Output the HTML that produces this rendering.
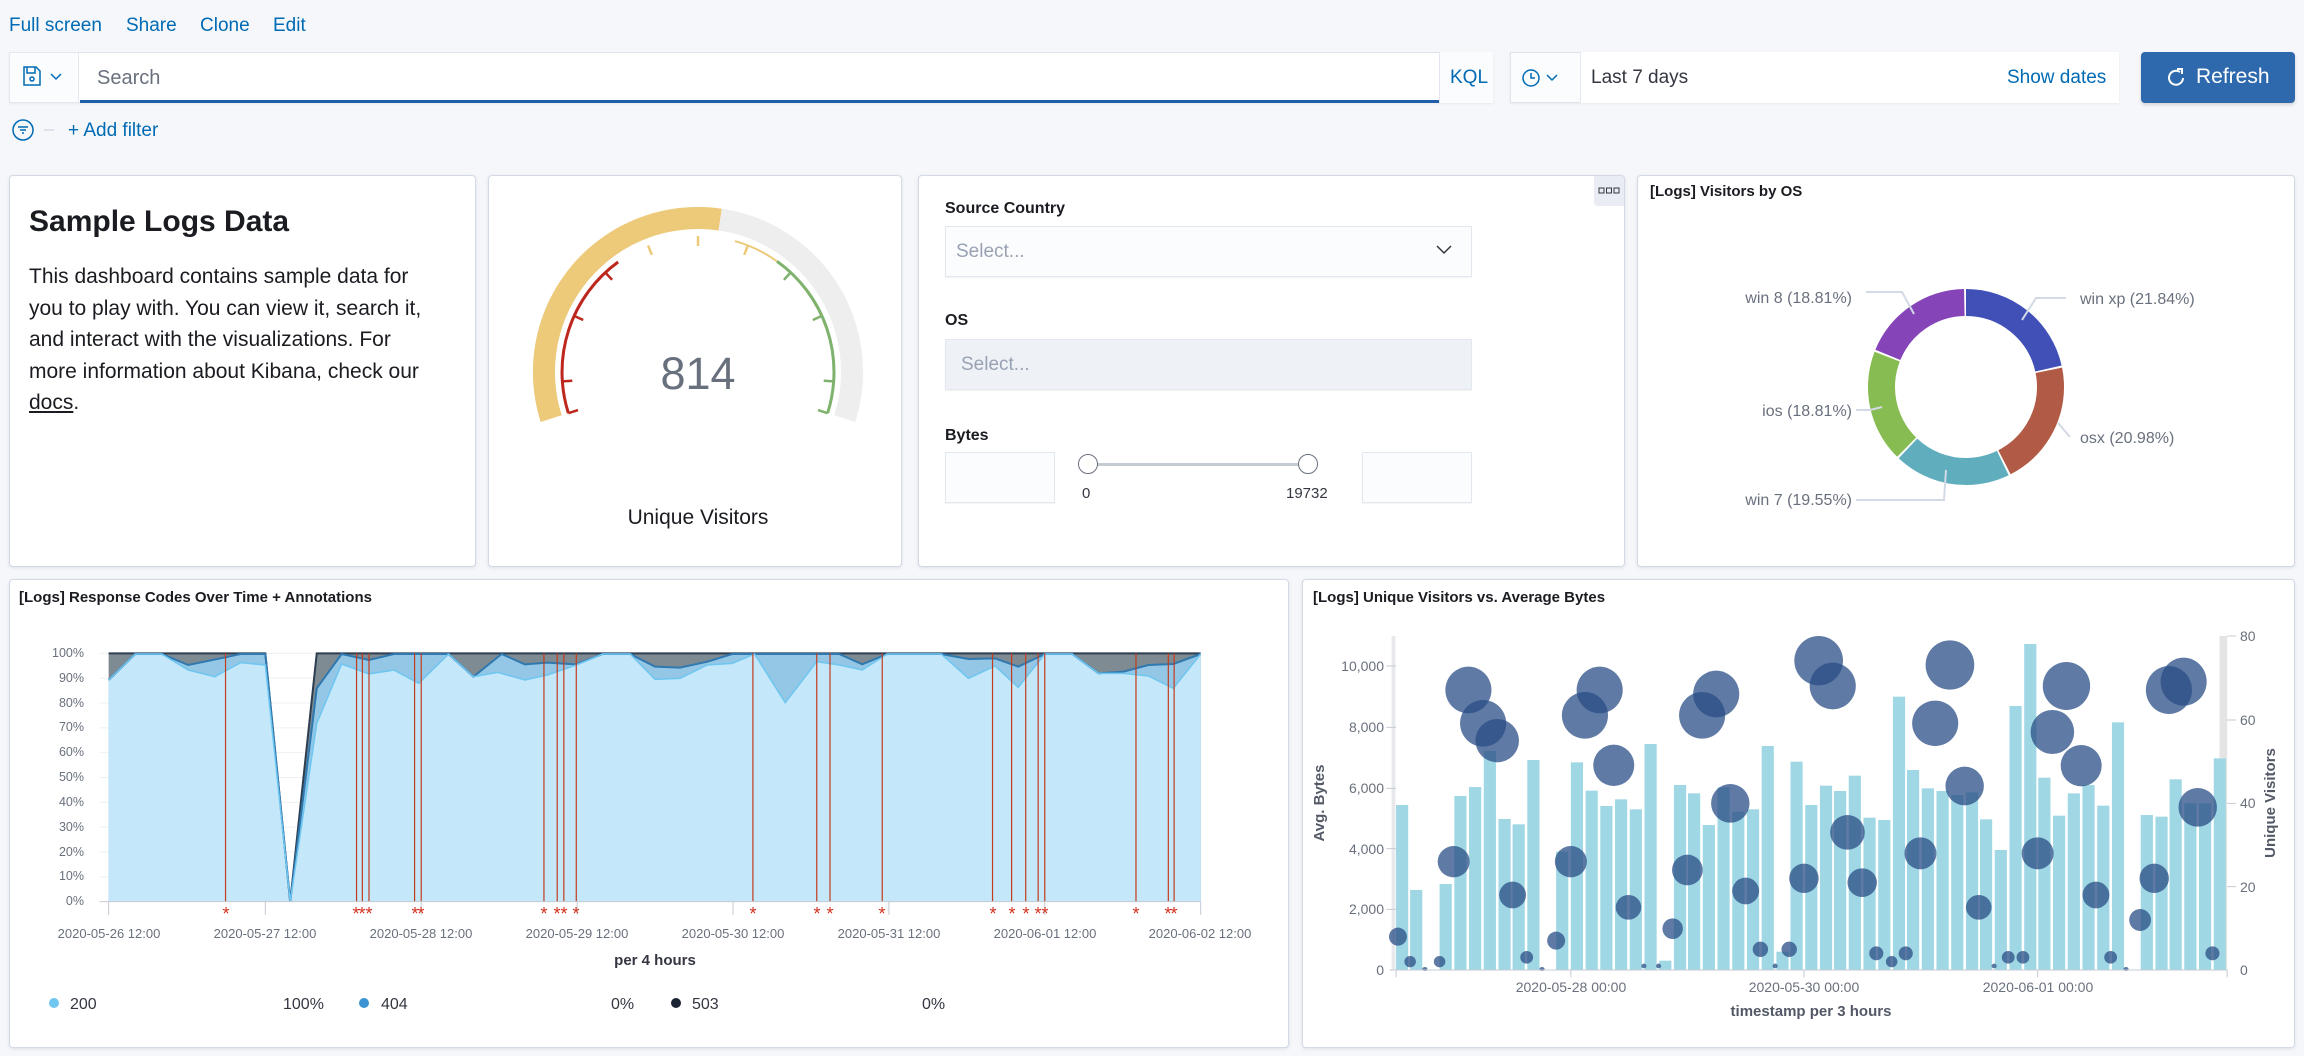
<!DOCTYPE html>
<html><head><meta charset="utf-8"><style>
*{box-sizing:border-box;margin:0;padding:0}
body{width:2304px;height:1056px;background:#f5f7fa;font-family:"Liberation Sans",sans-serif;position:relative;overflow:hidden;color:#343741}
.a{position:absolute}
.lnk{color:#006bb4;font-size:19px;top:15px}
.box{background:#fbfcfd;border:1px solid #dfe4ec;box-shadow:0 1px 2px rgba(0,0,0,.06)}
.panel{position:absolute;background:#fff;border:1px solid #d3dae6;border-radius:4px;box-shadow:0 1px 3px rgba(152,162,179,.25)}
.ttl{font-weight:bold;font-size:15px;color:#1a1c21}
.lbl{font-weight:bold;font-size:16px;color:#1a1c21}
.inp{position:absolute;background:#fbfcfd;border:1px solid #e3e8f0;box-shadow:0 1px 1px rgba(0,0,0,.05)}
.ph{color:#98a2b3;font-size:19px}
</style></head><body>
<div class="a lnk" style="left:9px">Full screen</div>
<div class="a lnk" style="left:126px">Share</div>
<div class="a lnk" style="left:200px">Clone</div>
<div class="a lnk" style="left:273px">Edit</div>

<div class="a box" style="left:9px;top:52px;width:1484px;height:51px;background:#fff"></div>
<div class="a" style="left:9px;top:52px;width:70px;height:51px;background:#fbfcfd;border:1px solid #e3e8f0"></div>
<svg class="a" style="left:22px;top:65px" width="48" height="26" viewBox="0 0 48 26"><path d="M2 2h12l4 4v14H2z M5 2v6h8V2" fill="none" stroke="#006bb4" stroke-width="1.5"/><circle cx="10" cy="14" r="2" fill="none" stroke="#006bb4" stroke-width="1.5"/><path d="M29 9l5 5 5-5" fill="none" stroke="#006bb4" stroke-width="1.5"/></svg>
<div class="a" style="left:97px;top:67px;font-size:20px;color:#69707d">Search</div>
<div class="a" style="left:80px;top:100px;width:1359px;height:3px;background:#1f5fa9"></div>
<div class="a" style="left:1439px;top:52px;width:54px;height:51px;border-left:1px solid #e3e8f0;background:#fbfcfd"></div>
<div class="a" style="left:1450px;top:67px;font-size:19px;color:#006bb4">KQL</div>

<div class="a box" style="left:1510px;top:52px;width:609px;height:51px;background:#fbfcfd"></div>
<div class="a" style="left:1580px;top:52px;width:539px;height:51px;border-left:1px solid #e3e8f0;background:#fff"></div>
<svg class="a" style="left:1520px;top:66px" width="50" height="24"><circle cx="11" cy="12" r="8" fill="none" stroke="#006bb4" stroke-width="1.5"/><path d="M11 7v5h4" fill="none" stroke="#006bb4" stroke-width="1.5"/><path d="M27 9l5 5 5-5" fill="none" stroke="#006bb4" stroke-width="1.5"/></svg>
<div class="a" style="left:1591px;top:67px;font-size:19px;color:#343741">Last 7 days</div>
<div class="a" style="left:2007px;top:67px;font-size:19px;color:#006bb4">Show dates</div>

<div class="a" style="left:2141px;top:52px;width:154px;height:51px;background:#2e69ad;border-radius:4px;box-shadow:0 2px 3px rgba(0,0,0,.15)"></div>
<svg class="a" style="left:2165px;top:66px" width="22" height="24"><path d="M15 6 A7 7 0 1 0 18 12" fill="none" stroke="#fff" stroke-width="2"/><path d="M12 3h5v5" fill="none" stroke="#fff" stroke-width="2"/></svg>
<div class="a" style="left:2196px;top:65px;font-size:21px;color:#fff">Refresh</div>

<svg class="a" style="left:12px;top:118px" width="60" height="24"><circle cx="11" cy="12" r="10" fill="none" stroke="#006bb4" stroke-width="1.5"/><path d="M6 9h10M8 12h6M10 15h2" stroke="#006bb4" stroke-width="1.5"/><path d="M32 12h10" stroke="#d3dae6" stroke-width="1.5"/></svg>
<div class="a" style="left:68px;top:120px;font-size:19px;color:#006bb4">+ Add filter</div>

<!-- panels -->
<div class="panel" style="left:9px;top:175px;width:467px;height:392px"></div>
<div class="panel" style="left:488px;top:175px;width:414px;height:392px"></div>
<div class="panel" style="left:918px;top:175px;width:707px;height:392px"></div>
<div class="panel" style="left:1637px;top:175px;width:658px;height:392px"></div>
<div class="panel" style="left:9px;top:579px;width:1280px;height:469px"></div>
<div class="panel" style="left:1302px;top:579px;width:993px;height:469px"></div>

<div class="a" style="left:29px;top:205px;font-size:30px;font-weight:bold;color:#1a1c21">Sample Logs Data</div>
<div class="a" style="left:29px;top:261px;width:398px;font-size:21px;line-height:31.6px;color:#1a1c21">This dashboard contains sample data for you to play with. You can view it, search it, and interact with the visualizations. For more information about Kibana, check our <u>docs</u>.</div>

<svg class="a" style="left:0;top:0" width="2304" height="1056">
<!-- gauge -->
<g transform="translate(698,372)">
<path d="M-157.3 50 A165 165 0 0 1 23.8 -163.3 L20.6 -141.5 A143 143 0 0 0 -136.3 43.3Z" fill="#ecca7a"/>
<path d="M23.8 -163.3 A165 165 0 0 1 157.3 50 L136.3 43.3 A143 143 0 0 0 20.6 -141.5Z" fill="#eeeeee"/>
<path d="M-129.6 41.2 A136 136 0 0 1 -79.9 -110" fill="none" stroke="#bd271e" stroke-width="3"/>
<path d="M37 -130.9 A136 136 0 0 1 79 -110.7" fill="none" stroke="#ecca7a" stroke-width="2"/>
<path d="M79 -110.7 A136 136 0 0 1 129.6 41.2" fill="none" stroke="#7eb26d" stroke-width="3"/>
<g stroke-width="2.5">
<path d="M-129.6 41.2L-120 38.1M-135.7 9.4L-125.7 8.7M-123.9 -56.1L-114.8 -52M-92.7 -99.5L-85.9 -92.2" stroke="#bd271e"/>
<path d="M-49.9 -126.5L-46.2 -117.2M0 -136L0 -126M49.9 -126.5L46.2 -117.2" stroke="#ecca7a"/>
<path d="M92.7 -99.5L85.9 -92.2M123.9 -56.1L114.8 -52M135.7 9.4L125.7 8.7M129.6 41.2L120 38.1" stroke="#7eb26d"/>
</g>
<text x="0" y="17" text-anchor="middle" font-family="Liberation Sans" font-size="45" fill="#69707d">814</text>
<text x="0" y="152" text-anchor="middle" font-family="Liberation Sans" font-size="21" fill="#1a1c21">Unique Visitors</text>
</g>

<!-- donut -->
<g transform="translate(1966,387) rotate(-90)" fill="none" stroke-width="27">
<circle r="84.5" stroke="#4150b7" stroke-dasharray="114 500"/>
<circle r="84.5" stroke="#b15a46" stroke-dasharray="109.5 500" stroke-dashoffset="-115.9"/>
<circle r="84.5" stroke="#60aebd" stroke-dasharray="102 500" stroke-dashoffset="-227.3"/>
<circle r="84.5" stroke="#86bc51" stroke-dasharray="98 500" stroke-dashoffset="-331.1"/>
<circle r="84.5" stroke="#8545b8" stroke-dasharray="98 500" stroke-dashoffset="-431"/>
</g>
<g stroke="#d3dae6" stroke-width="2" fill="none">
<path d="M1866 292h36l12 22"/><path d="M2066 298h-30l-14 22"/><path d="M1856 410h14l12-3"/><path d="M2070 437l-12-14"/><path d="M1856 500h88l2-30"/>
</g>
<g font-family="Liberation Sans" font-size="16" fill="#69707d">
<text x="1852" y="303" text-anchor="end">win 8 (18.81%)</text>
<text x="2080" y="304">win xp (21.84%)</text>
<text x="1852" y="416" text-anchor="end">ios (18.81%)</text>
<text x="2080" y="443">osx (20.98%)</text>
<text x="1852" y="505" text-anchor="end">win 7 (19.55%)</text>
</g>

<!-- left chart -->
<g transform="translate(0,560) scale(0.82918,0.33333)">
<path stroke="#eef0f3" vector-effect="non-scaling-stroke" d="M120 280H1448M120 354.5H1448M120 429H1448M120 503.5H1448M120 578H1448M120 652.5H1448M120 727H1448M120 801.5H1448M120 876H1448M120 950.5H1448"/>
<polygon fill="#7e8b92" points="131,280 320,280 350,1025 382,280 1448,280 1448,1025 131,1025"/>
<polygon fill="#93c7e5" points="131,360 163,282 195,282 227,315 272,292 290,282 320,282 350,1025 382,385 412,282 445,300 475,282 541,282 571,350 605,282 633,313 660,308 695,313 727,282 760,282 790,320 820,323 853,305 883,282 1012,282 1040,313 1070,282 1135,282 1168,297 1200,295 1228,320 1260,282 1293,282 1325,340 1355,335 1385,315 1415,312 1448,282 1448,1025 131,1025"/>
<polygon fill="#c4e7f9" points="131,360 163,282 195,282 227,330 259,350 290,308 320,315 350,1025 382,490 412,312 445,342 475,330 505,370 541,282 571,350 600,337 633,360 660,345 695,315 727,282 760,282 790,358 820,355 853,315 883,310 910,282 947,428 985,305 1012,315 1040,330 1070,282 1135,282 1168,355 1200,318 1228,382 1260,282 1293,282 1325,340 1355,340 1385,348 1415,385 1448,282 1448,1025 131,1025"/>
<polyline fill="none" stroke="#2c3e50" stroke-width="2" vector-effect="non-scaling-stroke" points="131,280 320,280 350,1025 382,280 1448,280"/>
<polyline fill="none" stroke="#2f78b0" stroke-width="2" vector-effect="non-scaling-stroke" points="131,360 163,282 195,282 227,315 272,292 290,282 320,282 350,1025 382,385 412,282 445,300 475,282 541,282 571,350 605,282 633,313 660,308 695,313 727,282 760,282 790,320 820,323 853,305 883,282 1012,282 1040,313 1070,282 1135,282 1168,297 1200,295 1228,320 1260,282 1293,282 1325,340 1355,335 1385,315 1415,312 1448,282"/>
<polyline fill="none" stroke="#6ec6f1" stroke-width="1.5" vector-effect="non-scaling-stroke" points="131,360 163,282 195,282 227,330 259,350 290,308 320,315 350,1025 382,490 412,312 445,342 475,330 505,370 541,282 571,350 600,337 633,360 660,345 695,315 727,282 760,282 790,358 820,355 853,315 883,310 910,282 947,428 985,305 1012,315 1040,330 1070,282 1135,282 1168,355 1200,318 1228,382 1260,282 1293,282 1325,340 1355,340 1385,348 1415,385 1448,282"/>
<path vector-effect="non-scaling-stroke" stroke="#c23c1e" stroke-width="1.2" d="M272 280V1025M430 280V1025M437 280V1025M445 280V1025M500 280V1025M508 280V1025M656 280V1025M672 280V1025M680 280V1025M695 280V1025M908 280V1025M985 280V1025M1001 280V1025M1064 280V1025M1197 280V1025M1220 280V1025M1237 280V1025M1252 280V1025M1260 280V1025M1370 280V1025M1409 280V1025M1416 280V1025"/>
<path vector-effect="non-scaling-stroke" stroke="#c5cbd3" stroke-width="1" d="M120 1025H1448M131 1025V1065M320 1025V1065M508 1025V1065M696 1025V1065M884 1025V1065M1072 1025V1065M1260 1025V1065M1448 1025V1065"/>
</g>
<g font-family="Liberation Sans" font-size="18" fill="#d4301e" text-anchor="middle">
<text x="226" y="920">*</text><text x="356" y="920">*</text><text x="362" y="920">*</text><text x="369" y="920">*</text><text x="415" y="920">*</text><text x="421" y="920">*</text><text x="544" y="920">*</text><text x="557" y="920">*</text><text x="564" y="920">*</text><text x="576" y="920">*</text><text x="753" y="920">*</text><text x="817" y="920">*</text><text x="830" y="920">*</text><text x="882" y="920">*</text><text x="993" y="920">*</text><text x="1012" y="920">*</text><text x="1026" y="920">*</text><text x="1038" y="920">*</text><text x="1045" y="920">*</text><text x="1136" y="920">*</text><text x="1168" y="920">*</text><text x="1174" y="920">*</text>
</g>
<g font-family="Liberation Sans" font-size="12.5" fill="#69707d" text-anchor="end">
<text x="84" y="657">100%</text><text x="84" y="682">90%</text><text x="84" y="707">80%</text><text x="84" y="731">70%</text><text x="84" y="756">60%</text><text x="84" y="781">50%</text><text x="84" y="806">40%</text><text x="84" y="831">30%</text><text x="84" y="856">20%</text><text x="84" y="880">10%</text><text x="84" y="905">0%</text>
</g>
<g font-family="Liberation Sans" font-size="13" fill="#69707d" text-anchor="middle">
<text x="109" y="938">2020-05-26 12:00</text><text x="265" y="938">2020-05-27 12:00</text><text x="421" y="938">2020-05-28 12:00</text><text x="577" y="938">2020-05-29 12:00</text><text x="733" y="938">2020-05-30 12:00</text><text x="889" y="938">2020-05-31 12:00</text><text x="1045" y="938">2020-06-01 12:00</text><text x="1200" y="938">2020-06-02 12:00</text>
</g>
<text x="655" y="965" text-anchor="middle" font-family="Liberation Sans" font-size="15" font-weight="bold" fill="#343741">per 4 hours</text>
<g font-family="Liberation Sans" font-size="16" fill="#343741">
<circle cx="54" cy="1003" r="5" fill="#6ec6f1"/><text x="70" y="1009">200</text><text x="283" y="1009">100%</text>
<circle cx="364" cy="1003" r="5" fill="#3a93d2"/><text x="381" y="1009">404</text><text x="611" y="1009">0%</text>
<circle cx="676" cy="1003" r="5" fill="#1a2333"/><text x="692" y="1009">503</text><text x="922" y="1009">0%</text>
</g>

<!-- right chart -->
<g transform="translate(1300,570) scale(0.64032,0.33333)">
<rect x="143" y="198" width="6" height="1002" fill="#e7e9ec"/>
<rect x="1436" y="198" width="12" height="1002" fill="#e4e4e4"/>
<g fill="#9fd7e4">
<rect x="150" y="705" width="19" height="495"/><rect x="172" y="960" width="19" height="240"/><rect x="218" y="942" width="19" height="258"/><rect x="241" y="678" width="19" height="522"/><rect x="264" y="651" width="19" height="549"/><rect x="287" y="543" width="19" height="657"/><rect x="310" y="747" width="19" height="453"/><rect x="332" y="763" width="19" height="437"/><rect x="355" y="570" width="19" height="630"/><rect x="400" y="845" width="19" height="355"/><rect x="423" y="577" width="19" height="623"/><rect x="446" y="662" width="19" height="538"/><rect x="469" y="708" width="19" height="492"/><rect x="492" y="688" width="19" height="512"/><rect x="515" y="718" width="19" height="482"/><rect x="538" y="522" width="19" height="678"/><rect x="561" y="1172" width="19" height="28"/><rect x="584" y="645" width="19" height="555"/><rect x="606" y="670" width="19" height="530"/><rect x="629" y="765" width="19" height="435"/><rect x="652" y="652" width="19" height="548"/><rect x="675" y="725" width="19" height="475"/><rect x="698" y="718" width="19" height="482"/><rect x="721" y="528" width="19" height="672"/><rect x="744" y="1145" width="19" height="55"/><rect x="766" y="575" width="19" height="625"/><rect x="789" y="705" width="19" height="495"/><rect x="812" y="647" width="19" height="553"/><rect x="834" y="663" width="19" height="537"/><rect x="857" y="617" width="19" height="583"/><rect x="880" y="743" width="19" height="457"/><rect x="903" y="750" width="19" height="450"/><rect x="926" y="380" width="19" height="820"/><rect x="948" y="600" width="19" height="600"/><rect x="971" y="655" width="19" height="545"/><rect x="994" y="663" width="19" height="537"/><rect x="1017" y="675" width="19" height="525"/><rect x="1040" y="667" width="19" height="533"/><rect x="1062" y="748" width="19" height="452"/><rect x="1085" y="840" width="19" height="360"/><rect x="1108" y="408" width="19" height="792"/><rect x="1131" y="222" width="19" height="978"/><rect x="1153" y="623" width="19" height="577"/><rect x="1176" y="737" width="19" height="463"/><rect x="1199" y="670" width="19" height="530"/><rect x="1222" y="645" width="19" height="555"/><rect x="1245" y="707" width="19" height="493"/><rect x="1268" y="457" width="19" height="743"/><rect x="1313" y="735" width="19" height="465"/><rect x="1336" y="740" width="19" height="460"/><rect x="1358" y="628" width="19" height="572"/><rect x="1381" y="700" width="19" height="500"/><rect x="1404" y="700" width="19" height="500"/><rect x="1427" y="565" width="19" height="635"/>
</g>
<g fill="#2a4d86" fill-opacity="0.75">
<ellipse cx="263" cy="360" rx="36" ry="70"/><ellipse cx="286" cy="460" rx="36" ry="70"/><ellipse cx="308" cy="512" rx="34" ry="65"/><ellipse cx="445" cy="436" rx="36" ry="70"/><ellipse cx="468" cy="360" rx="36" ry="70"/><ellipse cx="628" cy="436" rx="36" ry="70"/><ellipse cx="650" cy="372" rx="36" ry="70"/><ellipse cx="810" cy="272" rx="38" ry="74"/><ellipse cx="832" cy="348" rx="36" ry="70"/><ellipse cx="1015" cy="285" rx="38" ry="74"/><ellipse cx="992" cy="460" rx="36" ry="68"/><ellipse cx="1197" cy="348" rx="37" ry="72"/><ellipse cx="1175" cy="486" rx="34" ry="66"/><ellipse cx="1220" cy="587" rx="32" ry="62"/><ellipse cx="1357" cy="360" rx="36" ry="72"/><ellipse cx="1380" cy="335" rx="36" ry="72"/>
<ellipse cx="490" cy="586" rx="32" ry="62"/><ellipse cx="1038" cy="648" rx="30" ry="58"/><ellipse cx="672" cy="700" rx="30" ry="58"/><ellipse cx="855" cy="787" rx="27" ry="52"/><ellipse cx="1402" cy="712" rx="30" ry="58"/>
<ellipse cx="240" cy="875" rx="25" ry="47"/><ellipse cx="423" cy="875" rx="25" ry="47"/><ellipse cx="605" cy="900" rx="24" ry="46"/><ellipse cx="787" cy="925" rx="23" ry="44"/><ellipse cx="878" cy="938" rx="23" ry="43"/><ellipse cx="969" cy="850" rx="25" ry="48"/><ellipse cx="1152" cy="850" rx="25" ry="48"/><ellipse cx="1334" cy="925" rx="23" ry="44"/><ellipse cx="332" cy="975" rx="21" ry="40"/><ellipse cx="696" cy="963" rx="21" ry="40"/><ellipse cx="513" cy="1012" rx="20" ry="37"/><ellipse cx="1060" cy="1012" rx="20" ry="37"/><ellipse cx="1243" cy="975" rx="21" ry="40"/><ellipse cx="1312" cy="1050" rx="17" ry="33"/><ellipse cx="582" cy="1076" rx="16" ry="31"/><ellipse cx="400" cy="1112" rx="14" ry="27"/><ellipse cx="153" cy="1100" rx="14" ry="27"/>
<ellipse cx="172" cy="1175" rx="9" ry="17"/><ellipse cx="218" cy="1175" rx="9" ry="17"/><ellipse cx="354" cy="1162" rx="10" ry="19"/><ellipse cx="719" cy="1138" rx="12" ry="23"/><ellipse cx="764" cy="1138" rx="12" ry="23"/><ellipse cx="900" cy="1150" rx="11" ry="21"/><ellipse cx="946" cy="1150" rx="11" ry="21"/><ellipse cx="924" cy="1175" rx="9" ry="17"/><ellipse cx="1106" cy="1162" rx="10" ry="19"/><ellipse cx="1129" cy="1162" rx="10" ry="19"/><ellipse cx="1266" cy="1162" rx="10" ry="19"/><ellipse cx="1425" cy="1150" rx="11" ry="21"/>
<ellipse cx="195" cy="1197" rx="4" ry="6"/><ellipse cx="378" cy="1197" rx="4" ry="6"/><ellipse cx="537" cy="1188" rx="4" ry="7"/><ellipse cx="560" cy="1188" rx="4" ry="7"/><ellipse cx="742" cy="1188" rx="4" ry="7"/><ellipse cx="1084" cy="1188" rx="4" ry="7"/><ellipse cx="1290" cy="1197" rx="4" ry="6"/>
</g>
<path vector-effect="non-scaling-stroke" stroke="#c5cbd3" d="M140 1200H1448M150 1200V1222M423 1200V1222M787 1200V1222M1152 1200V1222M1448 1200V1222M135 288H150M135 472H150M135 655H150M135 836H150M135 1018H150M1448 198H1462M1448 450H1462M1448 700H1462M1448 950H1462"/>
</g>
<g font-family="Liberation Sans" font-size="14" fill="#69707d">
<g text-anchor="end"><text x="1384" y="671">10,000</text><text x="1384" y="732">8,000</text><text x="1384" y="793">6,000</text><text x="1384" y="854">4,000</text><text x="1384" y="914">2,000</text><text x="1384" y="975">0</text></g>
<text x="2240" y="641">80</text><text x="2240" y="725">60</text><text x="2240" y="808">40</text><text x="2240" y="892">20</text><text x="2240" y="975">0</text>
<g text-anchor="middle"><text x="1571" y="992">2020-05-28 00:00</text><text x="1804" y="992">2020-05-30 00:00</text><text x="2038" y="992">2020-06-01 00:00</text></g>
</g>
<text x="1811" y="1016" text-anchor="middle" font-family="Liberation Sans" font-size="15" font-weight="bold" fill="#535966">timestamp per 3 hours</text>
<text transform="translate(1324,803) rotate(-90)" text-anchor="middle" font-family="Liberation Sans" font-size="15" font-weight="bold" fill="#535966">Avg. Bytes</text>
<text transform="translate(2275,803) rotate(-90)" text-anchor="middle" font-family="Liberation Sans" font-size="15" font-weight="bold" fill="#535966">Unique Visitors</text>
</svg>

<div class="a ttl" style="left:1650px;top:183px">[Logs] Visitors by OS</div>
<div class="a ttl" style="left:19px;top:589px">[Logs] Response Codes Over Time + Annotations</div>
<div class="a ttl" style="left:1313px;top:589px">[Logs] Unique Visitors vs. Average Bytes</div>

<!-- controls -->
<div class="a" style="left:1594px;top:176px;width:30px;height:30px;background:#e9edf3;border-radius:0 3px 0 4px"></div>
<svg class="a" style="left:1598px;top:187px" width="22" height="8"><rect x="1" y="1" width="5" height="5" fill="none" stroke="#343741"/><rect x="8.5" y="1" width="5" height="5" fill="none" stroke="#343741"/><rect x="16" y="1" width="5" height="5" fill="none" stroke="#343741"/></svg>
<div class="a lbl" style="left:945px;top:200px">Source Country</div>
<div class="inp" style="left:945px;top:226px;width:527px;height:51px"></div>
<div class="a ph" style="left:956px;top:241px">Select...</div>
<svg class="a" style="left:1436px;top:244px" width="16" height="12"><path d="M1 2l7 7 7-7" fill="none" stroke="#343741" stroke-width="1.5"/></svg>
<div class="a lbl" style="left:945px;top:312px">OS</div>
<div class="inp" style="left:945px;top:339px;width:527px;height:51px;background:#eef2f7"></div>
<div class="a ph" style="left:961px;top:354px">Select...</div>
<div class="a lbl" style="left:945px;top:427px">Bytes</div>
<div class="inp" style="left:945px;top:452px;width:110px;height:51px"></div>
<div class="inp" style="left:1362px;top:452px;width:110px;height:51px"></div>
<div class="a" style="left:1088px;top:463px;width:220px;height:3px;background:#c5cbd3"></div>
<div class="a" style="left:1078px;top:454px;width:20px;height:20px;border-radius:50%;background:#fff;border:1.5px solid #69707d"></div>
<div class="a" style="left:1298px;top:454px;width:20px;height:20px;border-radius:50%;background:#fff;border:1.5px solid #69707d"></div>
<div class="a" style="left:1082px;top:485px;font-size:15px;color:#343741">0</div>
<div class="a" style="left:1286px;top:485px;font-size:15px;color:#343741">19732</div>
</body></html>
